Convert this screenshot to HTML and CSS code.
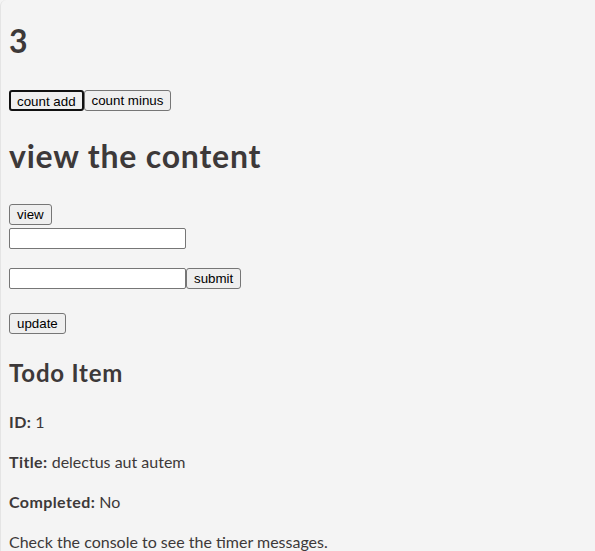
FILE: index.html
```html
<!DOCTYPE html>
<html lang="en">
<head>
<meta charset="utf-8">
<title>Counter</title>
<link rel="stylesheet" href="styles.css">
</head>
<body>
<div class="page">
  <h1 class="count">3</h1>
  <div class="btn-row">
    <button class="btn btn-focused">count add</button><button class="btn">count minus</button>
  </div>
  <h1 class="title">view the content</h1>
  <div class="view-row"><button class="btn">view</button></div>
  <div class="input-row"><input class="field" type="text"></div>
  <div class="form-row"><input class="field" type="text"><button class="btn">submit</button></div>
  <div class="update-row"><button class="btn">update</button></div>
  <h2 class="todo-title">Todo Item</h2>
  <p class="line"><strong>ID:</strong> 1</p>
  <p class="line"><strong>Title:</strong> delectus aut autem</p>
  <p class="line"><strong>Completed:</strong> No</p>
  <p class="line">Check the console to see the timer messages.</p>
</div>
</body>
</html>
```
FILE: styles.css
```css
html, body {
  margin: 0;
  padding: 0;
  background: #f4f4f4;
}

.page {
  box-sizing: border-box;
  min-height: 100vh;
  padding: 0 8px;
  border-left: 1px solid #e4e4e4;
  border-top-left-radius: 6px;
  font-family: "Lato", "Open Sans", sans-serif;
  font-size: 16px;
  line-height: 24px;
  color: #3d3939;
  overflow: hidden;
}

.count {
  margin: 17px 0 0;
  font-size: 32px;
  line-height: 48px;
  font-weight: 700;
}

.btn-row {
  display: flex;
  margin-top: 25px;
}

.title {
  margin: 21px 0 0;
  font-size: 32px;
  line-height: 48px;
  font-weight: 700;
  letter-spacing: 0.8px;
}

.view-row {
  display: flex;
  margin-top: 24px;
}

.input-row {
  display: flex;
  margin-top: 3px;
}

.form-row {
  display: flex;
  margin-top: 19px;
}

.update-row {
  display: flex;
  margin-top: 24px;
}

.btn {
  box-sizing: border-box;
  height: 21px;
  margin: 0;
  padding: 0 7px;
  border: 1px solid #767676;
  border-radius: 3px;
  background: #efefef;
  color: #000;
  font-family: "Liberation Sans", Arial, sans-serif;
  font-size: 13.333px;
  line-height: 19px;
}

.btn-focused {
  border: 2px solid #101010;
  padding: 0 6px;
}

.field {
  box-sizing: border-box;
  width: 177px;
  height: 21px;
  margin: 0;
  padding: 1px 2px;
  border: 1px solid #767676;
  border-radius: 2px;
  background: #fff;
  font-family: "Liberation Sans", Arial, sans-serif;
  font-size: 13.333px;
}

.todo-title {
  margin: 21px 0 0;
  font-size: 24px;
  line-height: 36px;
  font-weight: 700;
  letter-spacing: 0.8px;
}

.line {
  margin: 19px 0 0;
}

.line + .line {
  margin-top: 16px;
}

.line strong {
  font-weight: 700;
  letter-spacing: 0.4px;
}
```
